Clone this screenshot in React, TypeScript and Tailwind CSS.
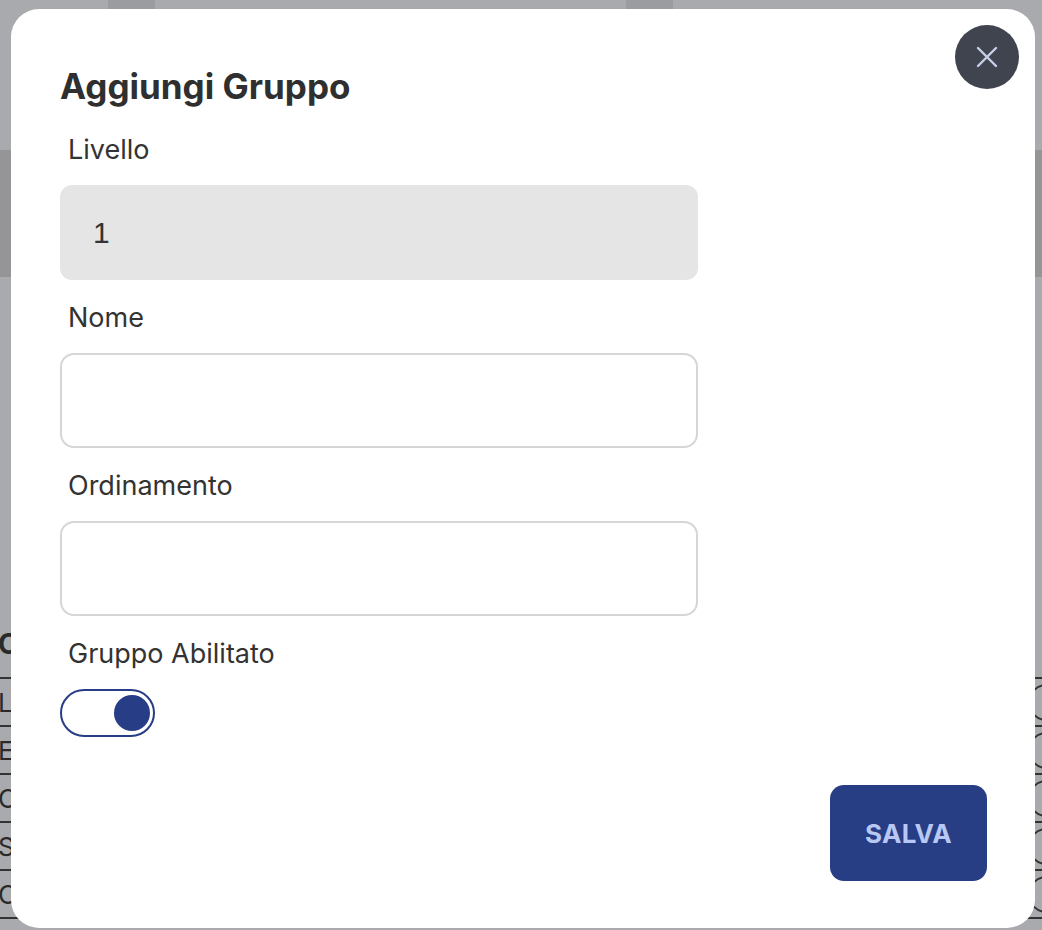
import React, { useState } from 'react';

const rows = ['LEGALE', 'EDILIZIA', 'ORDINE', 'SCUOLA', 'OPERE'];

function BackgroundPage() {
  return (
    <div className="flex h-full flex-col">
      <div className="h-[150px] bg-[#a9aaae]">
        <div className="flex">
          <div className="ml-[108px] h-[40px] w-[47px] bg-[#9b9ca0]" />
          <div className="ml-[471px] h-[40px] w-[47px] bg-[#9b9ca0]" />
        </div>
      </div>
      <div className="h-[127px] bg-[#959598]" />
      <div className="flex-1 bg-[#a9aaae] pt-[350px]">
        <h2 className="-ml-[2px] h-[50px] text-[28px] font-bold leading-[34px] text-[#2a2a2a]">Codici</h2>
        <div className="border-t-2 border-[#333]">
          {rows.map((r) => (
            <div key={r} className="flex h-[48px] items-center justify-between border-b-2 border-[#333]">
              <span className="-ml-[2px] text-[26px] text-[#2a2a2a]">{r}</span>
              <span className="-mr-[66px] h-[37px] w-[80px] rounded-full border-2 border-[#333]" />
            </div>
          ))}
        </div>
      </div>
    </div>
  );
}

function Field({ label, children }: { label: string; children: React.ReactNode }) {
  return (
    <div className="flex flex-col">
      <label className="pl-[8px] text-[27px] leading-[32px] text-[#333]">{label}</label>
      <div className="mt-[19px]">{children}</div>
    </div>
  );
}

export default function App() {
  const [enabled, setEnabled] = useState(true);

  return (
    <div
      className="relative h-[930px] w-full overflow-hidden"
      style={{ fontFamily: 'Inter, "Noto Sans", sans-serif' }}
    >
      <BackgroundPage />

      <div className="absolute inset-0 pl-[11px] pr-[7px] pt-[9px] pb-[2px]">
        <div className="relative flex h-full flex-col rounded-[28px] bg-white pl-[49px] pr-[48px] pt-[57px] pb-[47px]">
          <button className="absolute right-[16px] top-[16px] flex h-[64px] w-[64px] items-center justify-center rounded-full bg-[#40444f]">
            <svg width="22" height="22" viewBox="0 0 22 22" fill="none" stroke="#c8d0e8" strokeWidth="2.4" strokeLinecap="round">
              <path d="M2 2L20 20M20 2L2 20" />
            </svg>
          </button>

          <h1 className="text-[35px] font-bold leading-[40px] text-[#2f2f2f]">Aggiungi Gruppo</h1>

          <div className="mt-[28px] flex w-[638px] flex-col gap-[22px]">
            <Field label="Livello">
              <input
                readOnly
                value="1"
                className="h-[95px] w-full rounded-[12px] bg-[#e5e5e5] px-[33px] text-[30px] text-[#333] outline-none"
                style={{ fontFamily: '"Liberation Sans", Arial, sans-serif' }}
              />
            </Field>
            <Field label="Nome">
              <input className="h-[95px] w-full rounded-[14px] border-2 border-[#d6d6d6] bg-white px-[33px] text-[30px] text-[#333] outline-none" />
            </Field>
            <Field label="Ordinamento">
              <input className="h-[95px] w-full rounded-[14px] border-2 border-[#d6d6d6] bg-white px-[33px] text-[30px] text-[#333] outline-none" />
            </Field>
            <Field label="Gruppo Abilitato">
              <button
                onClick={() => setEnabled(!enabled)}
                className={`flex h-[48px] w-[95px] items-center rounded-full border-2 border-[#273d85] bg-white px-[3px] ${enabled ? 'justify-end' : 'justify-start'}`}
              >
                <span className="h-[36px] w-[36px] rounded-full bg-[#273d85]" />
              </button>
            </Field>
          </div>

          <div className="mt-auto flex justify-end">
            <button className="h-[96px] w-[157px] rounded-[14px] bg-[#273e84] text-[26px] font-bold tracking-[0.3px] text-[#b8c7f3]">
              SALVA
            </button>
          </div>
        </div>
      </div>
    </div>
  );
}
